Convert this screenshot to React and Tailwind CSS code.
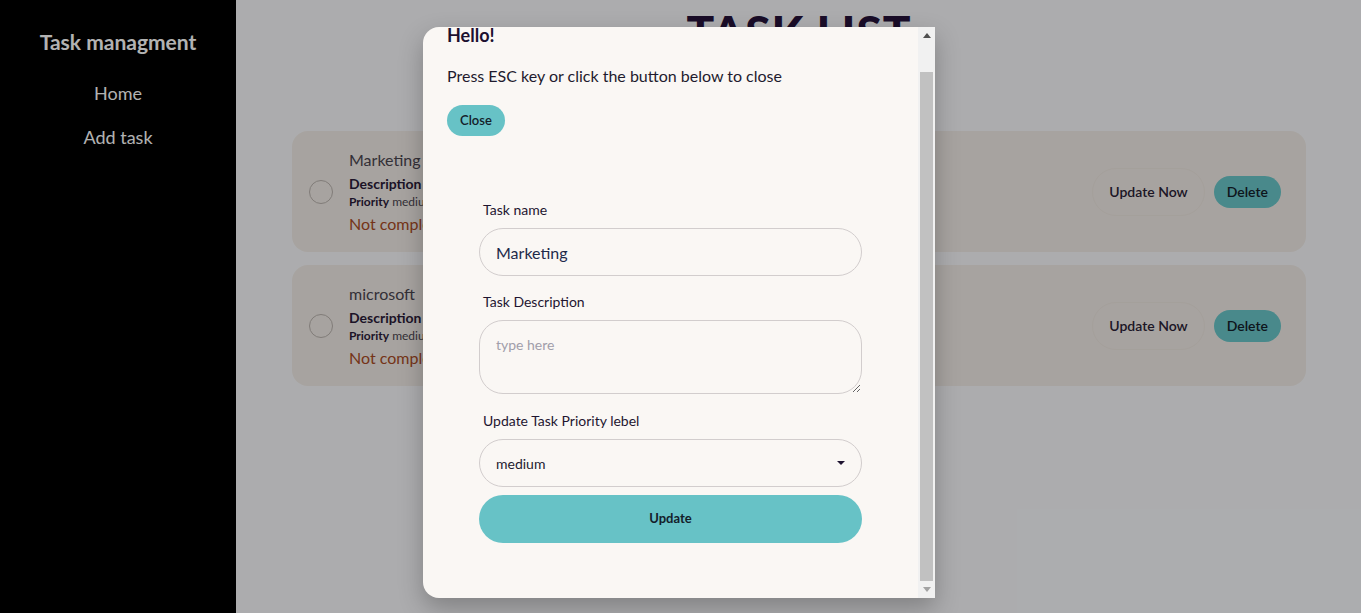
import React from "react";

const tasks = [
    { id: 1, name: "Marketing", desc: "", priority: "medium" },
    { id: 2, name: "microsoft", desc: "", priority: "medium" },
];

function TaskCard({ task }) {
    return (
        <div className="h-[121px] rounded-2xl bg-[#f0eae5] flex items-center pl-[17px] pr-[25px]">
            <div className="w-[24px] h-[24px] rounded-full border border-[#b8b2ad]" />
            <div className="ml-[16px] flex-1 leading-none">
                <div className="text-[16px] text-[#4a4550]">{task.name}</div>
                <div className="mt-[9px] text-[14px] font-bold text-[#2a1a38]">
                    Description <span className="font-normal">{task.desc}</span>
                </div>
                <div className="mt-[5px] text-[12px] text-[#4a4550]">
                    <span className="font-bold text-[#2a1a38]">Priority</span> {task.priority}
                </div>
                <div className="mt-[8px] text-[16px] text-[#a84a25]">Not completed</div>
            </div>
            <div className="flex items-center gap-[9px]">
                <button className="h-[48px] px-[16px] rounded-full border border-[#ebe5df] text-[14px] font-semibold text-[#2a2236]">
                    Update Now
                </button>
                <button className="h-[32px] px-[13px] rounded-full bg-[#69c5c8] text-[14px] font-semibold text-[#14202a]">
                    Delete
                </button>
            </div>
        </div>
    );
}

function Scrollbar() {
    return (
        <div className="w-[17px] bg-[#f1f1f1] flex flex-col items-center">
            <div className="h-[17px] flex items-center justify-center">
                <svg width="8" height="5" viewBox="0 0 8 5">
                    <path d="M0 5 L4 0 L8 5 Z" fill="#505050" />
                </svg>
            </div>
            <div className="mt-[28px] w-[13px] flex-1 bg-[#c1c1c1]" />
            <div className="h-[17px] flex items-center justify-center">
                <svg width="8" height="5" viewBox="0 0 8 5">
                    <path d="M0 0 L8 0 L4 5 Z" fill="#a3a3a3" />
                </svg>
            </div>
        </div>
    );
}

function UpdateModal() {
    return (
        <div className="absolute left-[423px] top-[27px] w-[512px] h-[571px] bg-[#faf7f4] rounded-l-2xl shadow-[0_10px_25px_rgba(0,0,0,0.25)] flex overflow-hidden">
            <div className="flex-1 overflow-hidden">
                <div className="px-[24px]">
                    <h3 className="text-[18px] font-bold text-[#1d1030] leading-none -mt-[1px]">Hello!</h3>
                    <p className="mt-[24px] text-[16px] text-[#1f1b2e] leading-none">
                        Press ESC key or click the button below to close
                    </p>
                    <button className="mt-[21px] h-[31px] px-[13px] rounded-full bg-[#67c2c6] text-[13px] font-semibold text-[#14202a]">
                        Close
                    </button>
                </div>
                <form className="w-[383px] mx-auto mt-[67px]">
                    <label className="block pl-[4px] text-[14px] text-[#1f1530] leading-none">Task name</label>
                    <input
                        defaultValue="Marketing"
                        className="mt-[11px] w-full h-[48px] rounded-full border border-[#d2cdcd] bg-transparent px-[16px] text-[16px] text-[#1e2a4a] outline-none"
                    />
                    <label className="block mt-[19px] pl-[4px] text-[14px] text-[#1f1530] leading-none">
                        Task Description
                    </label>
                    <textarea
                        placeholder="type here"
                        className="mt-[11px] block w-full h-[74px] rounded-[24px] border border-[#d2cdcd] bg-transparent px-[16px] py-[13px] text-[14px] text-[#1e2a4a] placeholder:text-[#a19eaa] outline-none"
                    />
                    <label className="block mt-[20px] pl-[4px] text-[14px] text-[#1f1530] leading-none">
                        Update Task Priority lebel
                    </label>
                    <div className="mt-[11px] h-[48px] rounded-full border border-[#d2cdcd] flex items-center justify-between pl-[16px] pr-[16px]">
                        <span className="text-[14px] text-[#1e1a30]">medium</span>
                        <svg width="8" height="4" viewBox="0 0 8 4">
                            <path d="M0 0 L8 0 L4 4 Z" fill="#1e1430" />
                        </svg>
                    </div>
                    <button
                        type="button"
                        className="mt-[8px] w-full h-[48px] rounded-full bg-[#67c2c6] text-[13px] font-bold text-[#14202a]"
                    >
                        Update
                    </button>
                </form>
            </div>
            <Scrollbar />
        </div>
    );
}

export default function App() {
    return (
        <div className="relative h-[613px] w-[1361px] flex overflow-hidden font-['Lato','Open_Sans',sans-serif]">
            <aside className="w-[236px] bg-black flex flex-col items-center text-white">
                <h1 className="mt-[31px] text-[21px] font-bold leading-none">Task managment</h1>
                <nav className="mt-[32px] flex flex-col items-center gap-[26px] text-[18px] leading-none">
                    <a>Home</a>
                    <a>Add task</a>
                </nav>
            </aside>
            <main className="flex-1 bg-[#f6f7fa] px-[56px] pr-[55px]">
                <h2 className="mt-[9px] text-center text-[46px] font-black text-[#26133a] leading-none tracking-[1px]">
                    TASK LIST
                </h2>
                <div className="mt-[76px] flex flex-col gap-[13px]">
                    {tasks.map((t) => (
                        <TaskCard key={t.id} task={t} />
                    ))}
                </div>
            </main>
            <div className="absolute inset-0 bg-black/30" />
            <UpdateModal />
        </div>
    );
}
